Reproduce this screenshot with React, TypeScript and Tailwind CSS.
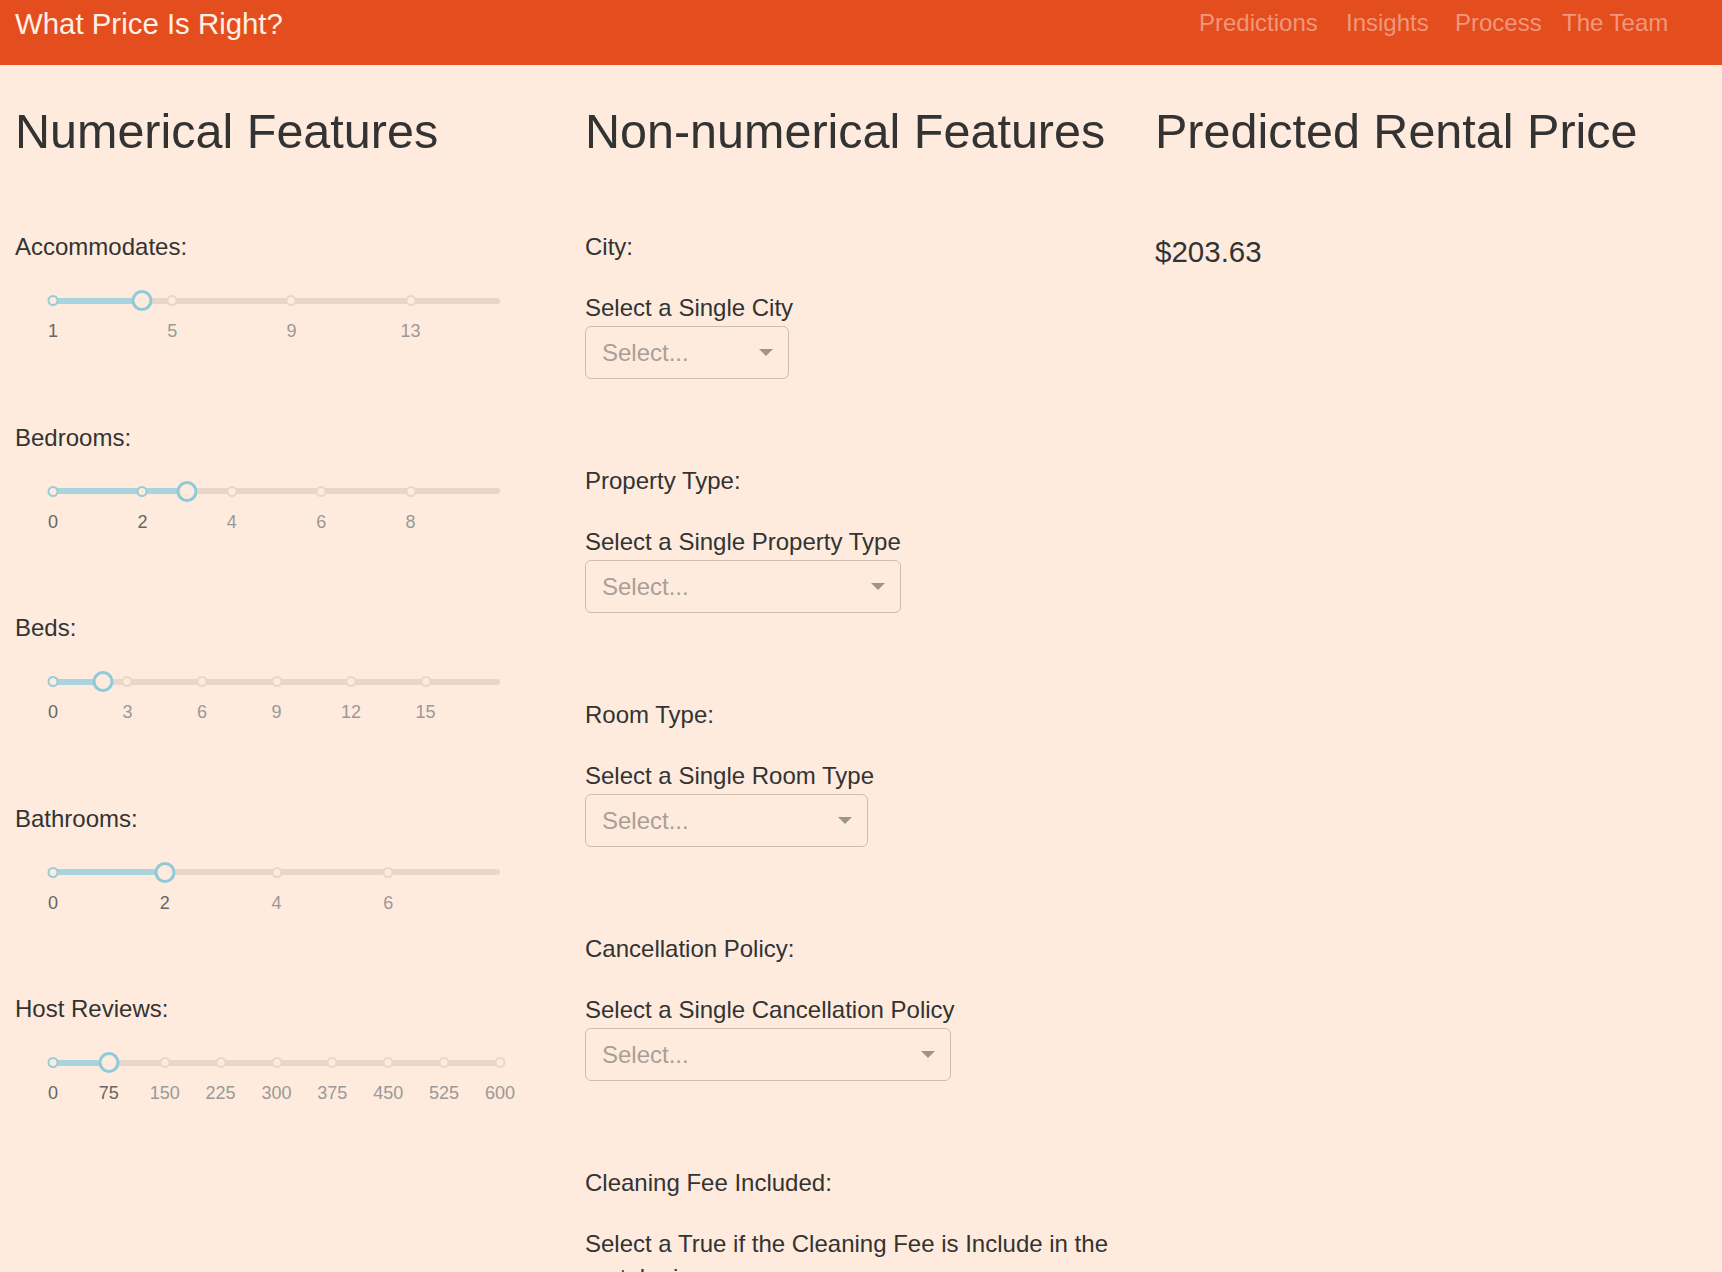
import React from 'react';

type SliderSpec = {
  label: string;
  min: number;
  max: number;
  value: number;
  marks: number[];
};

type SelectSpec = {
  label: string;
  hint: string;
  width: string;
};

const sliders: SliderSpec[] = [
  { label: 'Accommodates:', min: 1, max: 16, value: 4, marks: [1, 5, 9, 13] },
  { label: 'Bedrooms:', min: 0, max: 10, value: 3, marks: [0, 2, 4, 6, 8] },
  { label: 'Beds:', min: 0, max: 18, value: 2, marks: [0, 3, 6, 9, 12, 15] },
  { label: 'Bathrooms:', min: 0, max: 8, value: 2, marks: [0, 2, 4, 6] },
  {
    label: 'Host Reviews:',
    min: 0,
    max: 600,
    value: 75,
    marks: [0, 75, 150, 225, 300, 375, 450, 525, 600],
  },
];

const selects: SelectSpec[] = [
  { label: 'City:', hint: 'Select a Single City', width: 'w-[204px]' },
  { label: 'Property Type:', hint: 'Select a Single Property Type', width: 'w-[316px]' },
  { label: 'Room Type:', hint: 'Select a Single Room Type', width: 'w-[283px]' },
  { label: 'Cancellation Policy:', hint: 'Select a Single Cancellation Policy', width: 'w-[366px]' },
  {
    label: 'Cleaning Fee Included:',
    hint: 'Select a True if the Cleaning Fee is Include in the rental price',
    width: 'w-[204px]',
  },
];

// each nav item takes a fixed slot so the links land where the original ones do
const navLinks = [
  { name: 'Predictions', slot: 'w-[147px]' },
  { name: 'Insights', slot: 'w-[109px]' },
  { name: 'Process', slot: 'w-[107px]' },
  { name: 'The Team', slot: 'w-[107px]' },
];

function SliderField({ label, min, max, value, marks }: SliderSpec) {
  const pct = (v: number) => ((v - min) / (max - min)) * 100;

  return (
    <div className="h-[190.5px]">
      <div className="text-[24px] leading-[34px]">{label}</div>
      <div className="ml-[38px] w-[447px]">
        {/* rail, track, dots and handle */}
        <div className="relative mt-[25.8px] h-[21px]">
          <div className="absolute inset-x-0 top-[7.5px] h-[6px] rounded-full bg-[#e8d6c8]" />
          <div
            className="absolute left-0 top-[7.5px] h-[6px] rounded-full bg-[#aad4dd]"
            style={{ width: `${pct(value)}%` }}
          />
          {marks.map((m) => (
            <span
              key={m}
              className={`absolute top-[5px] h-[11px] w-[11px] -translate-x-1/2 rounded-full border-[2.5px] bg-[#feebdd] ${
                m <= value ? 'border-[#96cdd9]' : 'border-[#e8d6c8]'
              }`}
              style={{ left: `${pct(m)}%` }}
            />
          ))}
          <span
            className="absolute top-0 h-[21px] w-[21px] -translate-x-1/2 rounded-full border-[3px] border-[#8fcad8] bg-[#feebdd]"
            style={{ left: `${pct(value)}%` }}
          />
        </div>
        {/* mark labels */}
        <div className="relative mt-[11.2px] h-[18px] text-[18px] leading-[18px]">
          {marks.map((m) => (
            <span
              key={m}
              className={`absolute top-0 -translate-x-1/2 ${m <= value ? 'text-[#666]' : 'text-[#999]'}`}
              style={{ left: `${pct(m)}%` }}
            >
              {m}
            </span>
          ))}
        </div>
      </div>
    </div>
  );
}

function SelectField({ label, hint, width }: SelectSpec) {
  return (
    <div className="h-[234px]">
      <div className="text-[24px] leading-[34px]">{label}</div>
      <div className="mt-[26.3px] text-[24px] leading-[34px]">{hint}</div>
      <div
        className={`mt-[1.8px] flex h-[53px] ${width} items-center justify-between rounded-[6px] border border-[#cfbdaf] pl-[16px] pr-[15px]`}
      >
        <span className="text-[24px] text-[#a99f97]">Select...</span>
        <span className="h-0 w-0 border-x-[7.5px] border-t-[7.5px] border-x-transparent border-t-[#9d948d]" />
      </div>
    </div>
  );
}

export default function App() {
  return (
    <div className="min-h-screen bg-[#feebdd] font-['Liberation_Sans',Arial,sans-serif] text-[#333]">
      {/* Navbar */}
      <nav className="flex h-[65px] items-start bg-[#e44d1e] pl-[15px] pr-[53px]">
        <span className="pt-[5.5px] text-[29.4px] leading-[36px] text-[#fff0e6]">What Price Is Right?</span>
        <ul className="ml-auto flex pt-[7px]">
          {navLinks.map((link) => (
            <li key={link.name} className={`${link.slot} whitespace-nowrap text-[24px] leading-[32px] text-[#f1977a]`}>
              {link.name}
            </li>
          ))}
        </ul>
      </nav>

      <div className="grid w-[1710px] grid-cols-3 pt-[38px]">
        {/* Numerical */}
        <div className="px-[15px]">
          <h1 className="text-[48.5px] leading-[56px]">Numerical Features</h1>
          <div className="mt-[71.3px]">
            {sliders.map((s) => (
              <SliderField key={s.label} {...s} />
            ))}
          </div>
        </div>

        {/* Non-numerical */}
        <div className="px-[15px]">
          <h1 className="text-[48.5px] leading-[56px]">Non-numerical Features</h1>
          <div className="mt-[71.3px]">
            {selects.map((s) => (
              <SelectField key={s.label} {...s} />
            ))}
          </div>
        </div>

        {/* Prediction */}
        <div className="px-[15px]">
          <h1 className="text-[48.5px] leading-[56px]">Predicted Rental Price</h1>
          <div className="mt-[73px] text-[29.5px] leading-[40px]">$203.63</div>
        </div>
      </div>
    </div>
  );
}
